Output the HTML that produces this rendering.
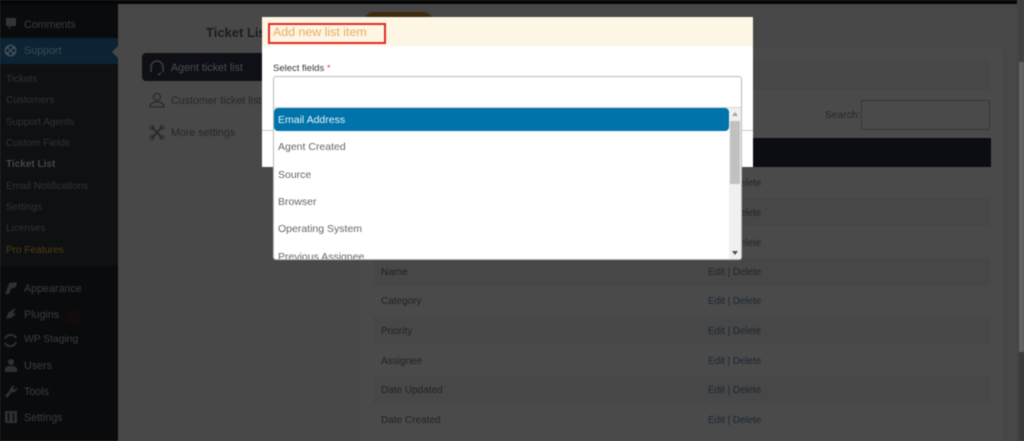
<!DOCTYPE html>
<html><head><meta charset="utf-8">
<style>
html,body{margin:0;padding:0;width:1024px;height:441px;overflow:hidden;background:#474747;font-family:"Liberation Sans",sans-serif}
*{box-sizing:border-box}
.a{position:absolute;white-space:nowrap}
#wrap{position:absolute;left:0;top:0;width:1024px;height:441px;overflow:hidden;filter:blur(.4px)}
.m{font-size:10.7px;color:#3a3c3e;left:24px}
.s{font-size:10px;color:#303234;left:6px}
.r{left:381px;font-size:10px;color:#222}
.e{left:708px;font-size:9.8px;color:#1a2630}
.bar{left:373px;width:618px;height:29px}
.o{left:278px;font-size:10.500px;color:#666}
svg{position:absolute}
</style></head><body><div id="wrap">
<div class="a" style="left:0;top:0;width:118px;height:441px;background:#090b0d"></div>
<div class="a" style="left:0;top:0;width:1017px;height:4px;background:#060606"></div>
<div class="a" style="left:0;top:38px;width:118px;height:26px;background:#0b2333"></div>
<div class="a" style="left:0;top:64px;width:118px;height:202px;background:#0e1012"></div>
<div class="a" style="left:112px;top:46px;border:6px solid transparent;border-right-color:#474747;border-left:0"></div>

<svg style="left:5px;top:18px" width="12" height="13" viewBox="0 0 12 13"><path d="M1 0H11V8H6L4 12V8H1Z" fill="#323436"/></svg>
<div class="a m" style="top:19px">Comments</div>
<svg style="left:4px;top:44px" width="13" height="13" viewBox="0 0 13 13"><circle cx="6.5" cy="6.500" r="6" fill="#404c56"/><circle cx="6.500" cy="3.500" r="1.500" fill="#0b2333"/><circle cx="6.500" cy="9.500" r="1.500" fill="#0b2333"/><circle cx="3.500" cy="6.500" r="1.500" fill="#0b2333"/><circle cx="9.500" cy="6.500" r="1.500" fill="#0b2333"/></svg>
<div class="a m" style="top:45px;color:#3c4a56">Support</div>
<div class="a s" style="top:74px">Tickets</div>
<div class="a s" style="top:95px">Customers</div>
<div class="a s" style="top:117px">Support Agents</div>
<div class="a s" style="top:138px">Custom Fields</div>
<div class="a s" style="top:159px;font-weight:bold;color:#444548">Ticket List</div>
<div class="a s" style="top:181px">Email Notifications</div>
<div class="a s" style="top:202px">Settings</div>
<div class="a s" style="top:223px">Licenses</div>
<div class="a s" style="top:245px;color:#4e3d0e">Pro Features</div>

<svg style="left:4px;top:282px" width="14" height="13" viewBox="0 0 14 13"><path d="M5 1L13 0L12 5L7 7L5 12L1 12L3 7Z" fill="#2e3032"/></svg>
<div class="a m" style="top:283px">Appearance</div>
<svg style="left:5px;top:308px" width="12" height="13" viewBox="0 0 12 13"><path d="M3 5L7 2L11 0L8 5L11 6L6 10H3L1 12L2 8Z" fill="#2e3032"/></svg>
<div class="a m" style="top:309px">Plugins</div>
<div class="a" style="left:65px;top:308px;width:17px;height:17px;border-radius:9px;background:#110b0b"></div>
<svg style="left:3px;top:333px" width="15" height="15" viewBox="0 0 15 15"><path d="M2 6A6 6 0 0 1 13 5M13 9A6 6 0 0 1 2 10" fill="none" stroke="#2e3032" stroke-width="2"/></svg>
<div class="a m" style="top:334px;font-size:10.300px">WP Staging</div>
<svg style="left:5px;top:359px" width="12" height="13" viewBox="0 0 12 13"><circle cx="6" cy="3" r="3" fill="#2e3032"/><path d="M0 13V9L3 7H9L12 9V13Z" fill="#2e3032"/></svg>
<div class="a m" style="top:360px">Users</div>
<svg style="left:4px;top:385px" width="14" height="14" viewBox="0 0 14 14"><path d="M13 2A4 4 0 0 1 8 7L3 13L1 11L6 5A4 4 0 0 1 11 1L9 3L11 5Z" fill="#2e3032"/></svg>
<div class="a m" style="top:386px">Tools</div>
<svg style="left:5px;top:411px" width="12" height="12" viewBox="0 0 12 12"><rect width="12" height="12" fill="#2e3032"/><path d="M3.500 2V10M8.500 2V10" stroke="#090b0d" stroke-width="1.500"/></svg>
<div class="a m" style="top:412px">Settings</div>

<div class="a" style="left:135px;top:16px;width:226px;height:425px;background:#484848"></div>
<div class="a" style="left:361px;top:49px;width:641px;height:392px;background:#4a4a4a;border:1px solid #4e4e4e"></div>
<div class="a" style="left:1017px;top:0;width:7px;height:441px;background:#444"></div>
<div class="a" style="left:1019px;top:0;width:5px;height:62px;background:#404040"></div>
<div class="a" style="left:1019px;top:62px;width:5px;height:290px;background:#636363"></div>
<div class="a" style="left:1019px;top:352px;width:5px;height:89px;background:#3a3a3a"></div>

<div class="a" style="left:206px;top:25px;font-size:13px;font-weight:bold;color:#1a1c1f">Ticket List</div>
<div class="a" style="left:364px;top:12px;width:69px;height:20px;border-radius:10px;background:#402a0e"></div>
<div class="a" style="left:142px;top:53px;width:130px;height:28px;border-radius:4px;background:#0f1016"></div>
<svg style="left:149px;top:60px" width="16" height="16" viewBox="0 0 16 16"><path d="M2 9V7A6 6 0 0 1 14 7V9M2 8V12M14 8V12M12 13L9 15" fill="none" stroke="#3e3e3e" stroke-width="1.500"/></svg>
<div class="a" style="left:171px;top:62px;font-size:10.7px;color:#4c4c4c">Agent ticket list</div>
<svg style="left:149px;top:92px" width="16" height="16" viewBox="0 0 16 16"><circle cx="8" cy="5" r="3.500" fill="none" stroke="#2a2a2a" stroke-width="1.300"/><path d="M1 15V13L5 10H11L15 13V15Z" fill="none" stroke="#2a2a2a" stroke-width="1.300"/></svg>
<div class="a" style="left:171px;top:95px;font-size:10.7px;color:#272727">Customer ticket list</div>
<svg style="left:149px;top:125px" width="16" height="15" viewBox="0 0 16 15"><path d="M3 2L13 13M13 2L3 13" stroke="#2a2a2a" stroke-width="2"/><circle cx="3" cy="2.500" r="2" fill="none" stroke="#2a2a2a"/><circle cx="13" cy="2.500" r="2" fill="none" stroke="#2a2a2a"/><circle cx="3" cy="12.500" r="2" fill="none" stroke="#2a2a2a"/><circle cx="13" cy="12.500" r="2" fill="none" stroke="#2a2a2a"/></svg>
<div class="a" style="left:171px;top:127px;font-size:10.7px;color:#272727">More settings</div>

<div class="a" style="left:373px;top:60px;width:617px;height:30px;background:#474747"></div>
<div class="a" style="left:825px;top:110px;font-size:10.300px;color:#262626">Search:</div>
<div class="a" style="left:861px;top:100px;width:129px;height:30px;border:1px solid #363636;border-radius:2px;background:#4a4a4a"></div>
<div class="a" style="left:373px;top:138px;width:618px;height:29px;background:#0c0c13"></div>

<div class="a bar" style="top:168px;background:#4a4a4a"></div>
<div class="a bar" style="top:198px;background:#474747"></div>
<div class="a bar" style="top:228px;background:#4a4a4a"></div>
<div class="a bar" style="top:257px;background:#474747"></div>
<div class="a bar" style="top:287px;background:#4a4a4a"></div>
<div class="a bar" style="top:316px;background:#474747"></div>
<div class="a bar" style="top:346px;background:#4a4a4a"></div>
<div class="a bar" style="top:375px;background:#474747"></div>
<div class="a bar" style="top:405px;background:#4a4a4a"></div>

<div class="a e" style="top:178px">Edit | Delete</div>
<div class="a e" style="top:208px">Edit | Delete</div>
<div class="a e" style="top:238px">Edit | Delete</div>
<div class="a r" style="top:267px">Name</div><div class="a e" style="top:267px">Edit | Delete</div>
<div class="a r" style="top:296px">Category</div><div class="a e" style="top:296px">Edit | Delete</div>
<div class="a r" style="top:326px">Priority</div><div class="a e" style="top:326px">Edit | Delete</div>
<div class="a r" style="top:356px">Assignee</div><div class="a e" style="top:356px">Edit | Delete</div>
<div class="a r" style="top:385px">Date Updated</div><div class="a e" style="top:385px">Edit | Delete</div>
<div class="a r" style="top:415px">Date Created</div><div class="a e" style="top:415px">Edit | Delete</div>

<div class="a" style="left:262px;top:17px;width:491px;height:150px;background:#fff"></div>
<div class="a" style="left:262px;top:17px;width:491px;height:29px;background:#fdf6e4"></div>
<div class="a" style="left:268px;top:23px;width:118px;height:21px;border:2px solid #e02a22"></div>
<div class="a" style="left:273px;top:25px;font-size:12.400px;color:#eda860">Add new list item</div>
<div class="a" style="left:273px;top:63px;font-size:9.500px;color:#333">Select fields <span style="color:#d9534f">*</span></div>
<div class="a" style="left:262px;top:130px;width:491px;height:1px;background:#ccc"></div>
<div class="a" style="left:273px;top:76px;width:469px;height:184px;background:#fff;border:1px solid #bbb;border-radius:3px"></div>
<div class="a" style="left:274px;top:107px;width:467px;height:1px;background:#d5d5d5"></div>
<div class="a" style="left:274px;top:108px;width:455px;height:23px;background:#0073aa;border-radius:4px"></div>
<div class="a" style="left:278px;top:114px;font-size:10.500px;color:#e8f4fa">Email Address</div>
<div class="a o" style="top:141px">Agent Created</div>
<div class="a o" style="top:169px">Source</div>
<div class="a o" style="top:196px">Browser</div>
<div class="a o" style="top:223px">Operating System</div>
<div class="a" style="left:274px;top:245px;width:455px;height:14px;overflow:hidden"><div class="a" style="left:4px;top:6px;font-size:10.500px;color:#666">Previous Assignee</div></div>
<div class="a" style="left:729px;top:108px;width:12px;height:151px;background:#f0f0f0"></div>
<div class="a" style="left:730px;top:121px;width:10px;height:63px;background:#c1c1c1"></div>
<div class="a" style="left:732px;top:112px;border:3px solid transparent;border-bottom:4px solid #a3a3a3;border-top:0"></div>
<div class="a" style="left:732px;top:251px;border:3px solid transparent;border-top:4px solid #505050;border-bottom:0"></div>
</div></body></html>
